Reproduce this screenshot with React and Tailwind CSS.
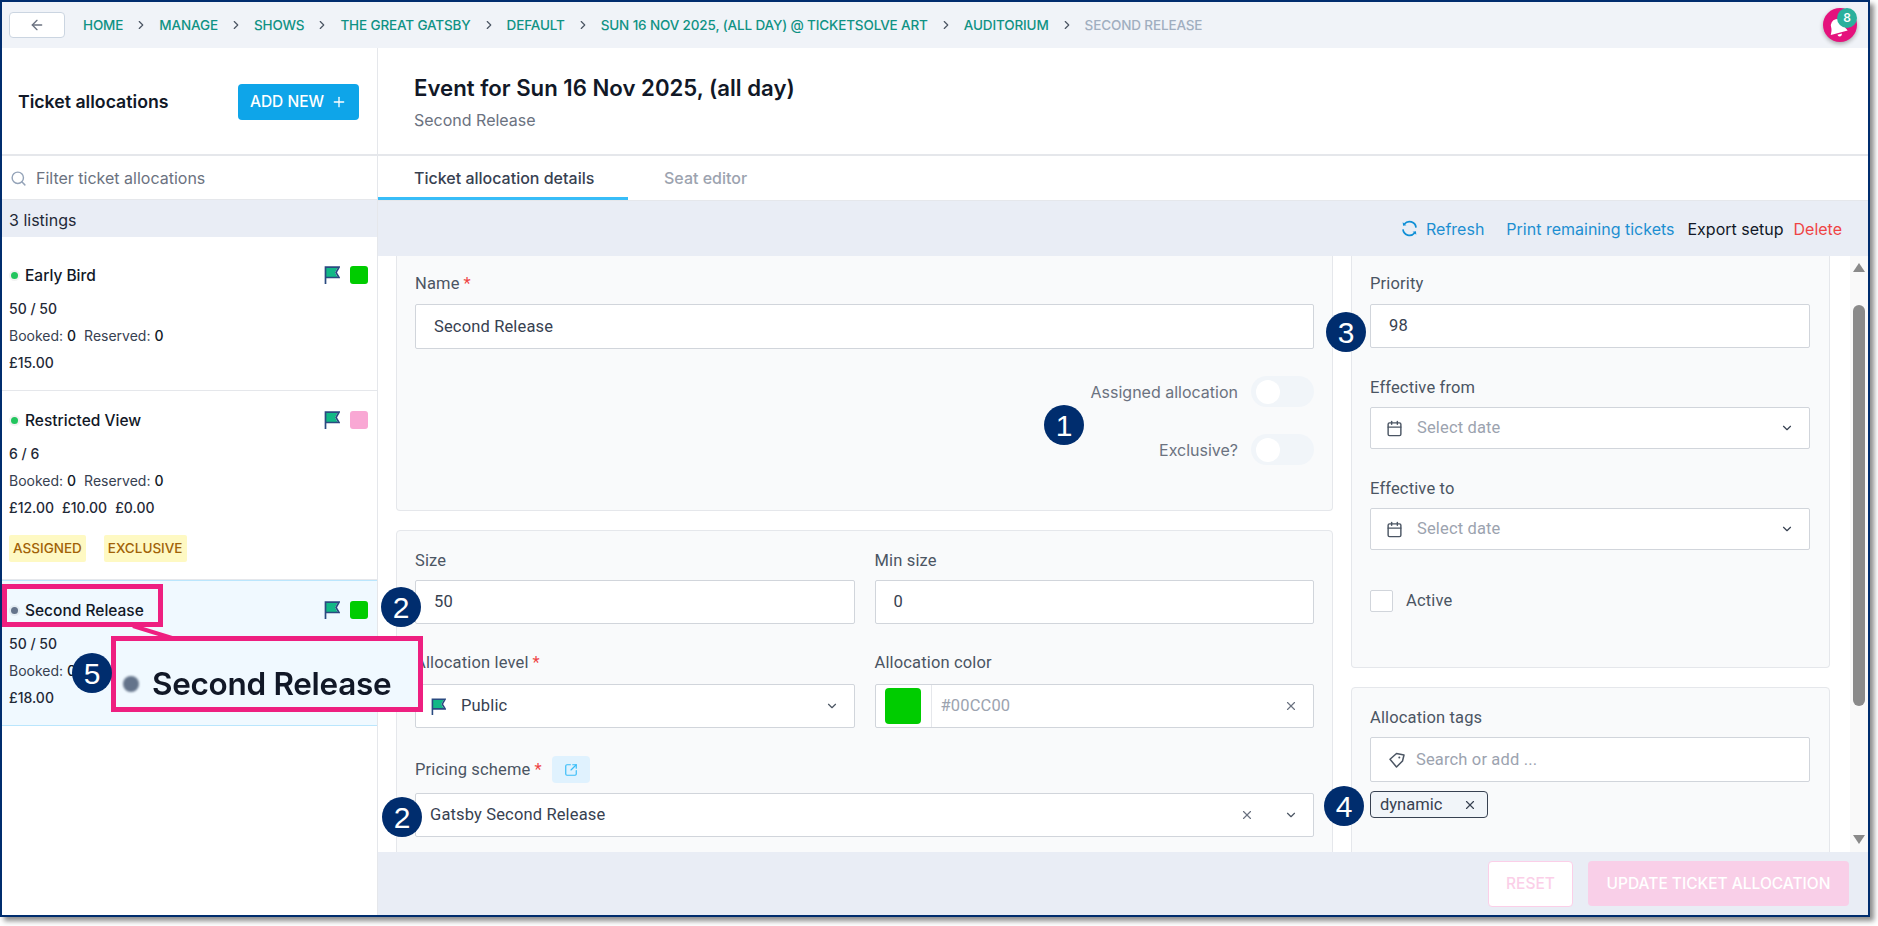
import React from 'react';
import { ArrowLeft, Calendar, ChevronDown, ChevronRight, Plus, Search, SquareArrowOutUpRight, X } from 'lucide-react';

const crumbs = ['HOME', 'MANAGE', 'SHOWS', 'THE GREAT GATSBY', 'DEFAULT', 'SUN 16 NOV 2025, (ALL DAY) @ TICKETSOLVE ART', 'AUDITORIUM'];

function FlagIcon({ className }) {
  return (
    <svg viewBox="0 0 16 18" className={className}>
      <path d="M2 2h11.500L11 6.500l2.500 4.500H2z" fill="#12b886" />
      <path d="M1.500 18V1.200H15L12 6.500l3 5H1.500" fill="none" stroke="#2a4a80" strokeWidth="1.700" />
    </svg>
  );
}

function RefreshIcon({ className }) {
  return (
    <svg viewBox="0 0 18 18" className={className} fill="none" stroke="#0f8fd6" strokeWidth="1.800">
      <path d="M3.600 4.200A7 7 0 0 1 15.900 8" />
      <path d="M14.400 13.800A7 7 0 0 1 2.100 10" />
      <path d="M1.800 2.500l.4 3.600 3.500-.5z" fill="#0f8fd6" stroke="none" />
      <path d="M16.200 15.500l-.4-3.600-3.500.5z" fill="#0f8fd6" stroke="none" />
    </svg>
  );
}

function TagIcon({ className }) {
  return (
    <svg viewBox="0 0 16 16" className={className} fill="none" stroke="#4b5563" strokeWidth="1.500" strokeLinejoin="round">
      <path d="M1 7.200L7.500 1.500 15 3l-1.500 6-6 6z" />
      <circle cx="10.300" cy="5.600" r="1" fill="#4b5563" stroke="none" />
    </svg>
  );
}

function Marker({ n, className }) {
  return (
    <div className={`absolute w-[40px] h-[40px] rounded-full bg-[#002d6e] text-white flex items-center justify-center text-[30px] font-['Liberation_Sans',sans-serif] ${className}`}>
      {n}
    </div>
  );
}

function Listing({ name, dot, swatch, count, prices, badges, className }) {
  return (
    <div className={`px-[7px] border-b ${className}`}>
      <div className="flex items-center h-[20px]">
        <span className={`w-[7px] h-[7px] rounded-full ${dot} ring-2 ring-black/5 ml-[2px]`} />
        <span className="ml-[7px] pt-[1px] text-[15.500px] font-medium text-[#111827]">{name}</span>
        <FlagIcon className="ml-auto w-[16px] h-[18px]" />
        <span className={`ml-[10px] mr-[2px] w-[18px] h-[18px] rounded-[3px] ${swatch}`} />
      </div>
      <p className="mt-[14px] h-[20px] leading-[20px] text-[14px] font-medium text-[#1f2937]">{count}</p>
      <p className="mt-[7px] h-[20px] leading-[20px] text-[14px] text-[#374151]">
        Booked: <span className="font-medium text-[#111827]">0</span>
        <span className="ml-[8px]">Reserved: </span><span className="font-medium text-[#111827]">0</span>
      </p>
      <div className="mt-[7px] h-[20px] leading-[20px] flex gap-[8px] text-[14px] font-medium text-[#1f2937]">
        {prices.map((p) => <span key={p}>{p}</span>)}
      </div>
      {badges && (
        <div className="mt-[17px] flex gap-[18px]">
          {badges.map((b) => (
            <span key={b} className="h-[27px] px-[4px] flex items-center rounded-[2px] bg-[#fef9c3] text-[13.500px] font-medium text-[#a16207]">{b}</span>
          ))}
        </div>
      )}
    </div>
  );
}

function Label({ children, required, className = '' }) {
  return (
    <div className={`h-[20px] leading-[20px] text-[16.500px] tracking-[0.15px] text-[#4b5563] font-['Roboto',sans-serif] ${className}`}>
      {children}
      {required && <span className="ml-[4px] text-[#ef4444]">*</span>}
    </div>
  );
}

function Box({ className = '', children }) {
  return (
    <div className={`flex items-center bg-white border border-[#d1d5db] rounded-[2px] text-[16.500px] tracking-[0.15px] text-[#374151] font-['Roboto',sans-serif] ${className}`}>
      {children}
    </div>
  );
}

function DateField() {
  return (
    <Box className="h-[42px] mt-[9px] pl-[15px] pr-[15px]">
      <Calendar size={17} className="text-[#4b5563]" />
      <span className="ml-[14px] pt-[1px] text-[#9ca3af]">Select date</span>
      <ChevronDown size={14} className="ml-auto text-[#374151]" />
    </Box>
  );
}

function Toggle({ label }) {
  return (
    <div className="flex items-center justify-end h-[31px]">
      <span className="mr-[13px] text-[16px] text-[#6b7280]">{label}</span>
      <span className="w-[63px] h-[31px] rounded-full bg-[#f1f5f9] flex items-center pl-[5px]">
        <span className="w-[24px] h-[24px] rounded-full bg-white" />
      </span>
    </div>
  );
}

export default function App() {
  return (
    <div className="relative w-[1878px] h-[926px] bg-white overflow-hidden font-['Inter',sans-serif]">
      <div className="flex flex-col w-[1870px] h-[917px] border-2 border-[#002d6e] shadow-[4px_4px_5px_rgba(0,0,0,0.45)]">
        {/* top bar */}
        <div className="relative h-[46px] shrink-0 bg-[#f0f3f8] flex items-center pl-[7px]">
          <button className="w-[56px] h-[26px] flex items-center justify-center bg-white border border-[#cbd5e1] rounded-[4px]">
            <ArrowLeft size={16} className="text-[#6b7280]" />
          </button>
          <div className="ml-[18px] flex items-center text-[13.500px] tracking-[-0.14px] font-medium">
            {crumbs.map((c) => (
              <React.Fragment key={c}>
                <span className="text-[#0f9284]">{c}</span>
                <ChevronRight size={14} className="mx-[11px] text-[#4b5563]" />
              </React.Fragment>
            ))}
            <span className="text-[#a0aec0]">SECOND RELEASE</span>
          </div>
          <div className="absolute left-[1821px] top-[6px] w-[34px] h-[34px] rounded-full bg-[#e5127d] shadow-[0_2px_4px_rgba(0,0,0,0.3)]">
            <svg viewBox="0 0 24 24" className="absolute left-[4px] top-[9px] w-[22px] h-[22px] rotate-[-15deg]" fill="#fff">
              <path d="M12 2a7 7 0 0 0-7 7c0 5-2.500 7-2.500 8.500h19C21.500 16 19 14 19 9a7 7 0 0 0-7-7zM9.500 19a2.500 2.500 0 0 0 5 0z" />
            </svg>
            <span className="absolute left-[14px] top-0 w-[20px] h-[20px] rounded-full bg-[#2bb09c] text-white text-[12px] font-semibold flex items-center justify-center">8</span>
          </div>
        </div>

        <div className="flex flex-1 min-h-0">
          {/* sidebar */}
          <div className="w-[376px] shrink-0 border-r border-[#e5e7eb] flex flex-col">
            <div className="h-[108px] shrink-0 border-b-2 border-[#e5e7eb] flex items-center justify-between pl-[16px] pr-[18px] pt-[2px]">
              <h2 className="text-[17.700px] font-semibold text-[#111827]">Ticket allocations</h2>
              <button className="w-[121px] h-[36px] rounded-[4px] bg-[#0ea5e9] text-white text-[15.500px] font-medium flex items-center justify-center gap-[7px]">
                ADD NEW <Plus size={16} />
              </button>
            </div>
            <div className="h-[44px] shrink-0 flex items-center pl-[8px] pt-[1px] border-b border-[#e5e7eb]">
              <Search size={17} className="text-[#94a3b8]" />
              <span className="ml-[9px] text-[16px] text-[#6b7280]">Filter ticket allocations</span>
            </div>
            <div className="h-[37px] shrink-0 bg-[#e9edf5] flex items-center pl-[7px] pt-[2px] text-[16px] text-[#1f2937]">3 listings</div>
            <Listing className="h-[154px] pt-[28px] border-[#e5e7eb]" name="Early Bird" dot="bg-[#22c55e]" swatch="bg-[#00cc00]" count="50 / 50" prices={['£15.00']} />
            <Listing className="h-[189px] pt-[19px] border-[#e5e7eb]" name="Restricted View" dot="bg-[#22c55e]" swatch="bg-[#f9a8d4]" count="6 / 6" prices={['£12.00', '£10.00', '£0.00']} badges={['ASSIGNED', 'EXCLUSIVE']} />
            <Listing className="h-[146px] pt-[19px] border-t bg-[#f0f9ff] border-[#bae6fd]" name="Second Release" dot="bg-[#64748b]" swatch="bg-[#00cc00]" count="50 / 50" prices={['£18.00']} />
          </div>

          {/* content */}
          <div className="flex-1 min-w-0 flex flex-col">
            <div className="h-[108px] shrink-0 border-b-2 border-[#e5e7eb] pl-[36px] pt-[26px]">
              <h1 className="text-[22.200px] leading-[28px] font-semibold text-[#111827]">Event for Sun 16 Nov 2025, (all day)</h1>
              <p className="mt-[8px] text-[16px] leading-[20px] text-[#6b7280]">Second Release</p>
            </div>
            <div className="h-[45px] shrink-0 flex border-b border-[#e5e7eb]">
              <div className="w-[250px] border-b-[3px] border-[#38bdf8] pl-[36px] pt-[10px] text-[16px] font-medium text-[#374151]">Ticket allocation details</div>
              <div className="ml-[36px] pt-[10px] text-[16px] font-medium text-[#9ca3af]">Seat editor</div>
            </div>
            <div className="h-[55px] shrink-0 bg-[#e9edf5] flex items-center justify-end pr-[26px] text-[16px]">
              <RefreshIcon className="w-[17px] h-[17px]" />
              <span className="ml-[8px] text-[#1d8fd1]">Refresh</span>
              <span className="ml-[22px] text-[#1d8fd1]">Print remaining tickets</span>
              <span className="ml-[13px] text-[#111827]">Export setup</span>
              <span className="ml-[10px] text-[#ef4444]">Delete</span>
            </div>

            <div className="flex-1 min-h-0 overflow-hidden flex pl-[18px]">
              <div className="w-[937px] shrink-0">
                <div className="h-[255px] bg-[#f9fafb] border border-t-0 border-[#e5e7eb] rounded-b-[4px] px-[18px] pt-[18px]">
                  <Label required>Name</Label>
                  <Box className="mt-[10px] h-[45px] pl-[18px] pt-[1px]">Second Release</Box>
                  <div className="mt-[27px]"><Toggle label="Assigned allocation" /></div>
                  <div className="mt-[27px]"><Toggle label="Exclusive?" /></div>
                </div>
                <div className="mt-[19px] h-[400px] bg-[#f9fafb] border border-[#e5e7eb] rounded-[4px] px-[18px] pt-[20px]">
                  <div className="grid grid-cols-2 gap-x-[20px]">
                    <div>
                      <Label>Size</Label>
                      <Box className="mt-[9px] h-[44px] pl-[18px]">50</Box>
                    </div>
                    <div>
                      <Label>Min size</Label>
                      <Box className="mt-[9px] h-[44px] pl-[18px]">0</Box>
                    </div>
                    <div className="mt-[29px]">
                      <Label required>Allocation level</Label>
                      <Box className="mt-[11px] h-[44px] pl-[15px] pr-[15px]">
                        <FlagIcon className="w-[15px] h-[17px]" />
                        <span className="ml-[15px] pt-[1px]">Public</span>
                        <ChevronDown size={14} className="ml-auto text-[#4b5563]" />
                      </Box>
                    </div>
                    <div className="mt-[29px]">
                      <Label>Allocation color</Label>
                      <Box className="mt-[11px] h-[44px] pr-[15px]">
                        <span className="h-full w-[56px] shrink-0 border-r border-[#e5e7eb] flex items-center justify-center">
                          <span className="w-[36px] h-[36px] rounded-[4px] bg-[#00cc00]" />
                        </span>
                        <span className="ml-[9px] pt-[1px] text-[#9ca3af]">#00CC00</span>
                        <X size={14} className="ml-auto text-[#6b7280]" />
                      </Box>
                    </div>
                  </div>
                  <div className="mt-[28px] flex items-center h-[27px]">
                    <Label required>Pricing scheme</Label>
                    <span className="ml-[10px] w-[38px] h-[27px] rounded-[4px] bg-[#e0f2fe] flex items-center justify-center">
                      <SquareArrowOutUpRight size={14} className="text-[#38bdf8]" />
                    </span>
                  </div>
                  <Box className="mt-[10px] h-[44px] pl-[14px] pr-[15px]">
                    Gatsby Second Release
                    <X size={14} className="ml-auto text-[#6b7280]" />
                    <ChevronDown size={14} className="ml-[30px] text-[#4b5563]" />
                  </Box>
                </div>
              </div>

              <div className="ml-[18px] w-[479px] shrink-0">
                <div className="h-[412px] bg-[#f9fafb] border border-t-0 border-[#e5e7eb] rounded-b-[4px] pl-[18px] pr-[19px] pt-[18px]">
                  <Label>Priority</Label>
                  <Box className="mt-[10px] h-[44px] pl-[18px] pt-[1px]">98</Box>
                  <Label className="mt-[30px]">Effective from</Label>
                  <DateField />
                  <Label className="mt-[30px]">Effective to</Label>
                  <DateField />
                  <div className="mt-[39px] flex items-center">
                    <span className="w-[23px] h-[22px] bg-white border border-[#d1d5db] rounded-[2px]" />
                    <span className="ml-[13px] text-[16.500px] tracking-[0.15px] text-[#4b5563] font-['Roboto',sans-serif]">Active</span>
                  </div>
                </div>
                <div className="mt-[19px] h-[300px] bg-[#f9fafb] border border-[#e5e7eb] rounded-[4px] pl-[18px] pr-[19px] pt-[20px]">
                  <Label>Allocation tags</Label>
                  <Box className="mt-[9px] h-[45px] pl-[18px]">
                    <TagIcon className="w-[16px] h-[16px]" />
                    <span className="ml-[11px] pt-[1px] text-[#9ca3af]">Search or add ...</span>
                  </Box>
                  <div className="mt-[9px] w-[118px] h-[27px] flex items-center justify-between pl-[9px] pr-[10px] pt-[1px] bg-[#f1f5f9] border border-[#374151] rounded-[4px] text-[16.500px] text-[#374151] font-['Roboto',sans-serif]">
                    dynamic
                    <X size={14} className="text-[#374151]" />
                  </div>
                </div>
              </div>

              {/* scrollbar */}
              <div className="ml-[20px] w-[18px] shrink-0 flex flex-col items-center bg-[#f9f9f9] pt-[7px]">
                <svg viewBox="0 0 12 9" className="w-[12px] h-[9px]" fill="#8a8a8a"><path d="M6 0l6 9H0z" /></svg>
                <div className="mt-[33px] w-[12px] h-[401px] rounded-full bg-[#8a8a8a]" />
                <svg viewBox="0 0 12 9" className="mt-[129px] w-[12px] h-[9px]" fill="#8a8a8a"><path d="M6 9L0 0h12z" /></svg>
              </div>
            </div>

            <div className="h-[63px] shrink-0 bg-[#e9edf5] flex items-center justify-end gap-[15px] pr-[19px]">
              <button className="w-[85px] h-[46px] bg-white border border-[#fbcfe8] rounded-[4px] text-[15.500px] font-medium text-[#fbcfe8]">RESET</button>
              <button className="w-[261px] h-[45px] bg-[#f9cfe8] rounded-[4px] text-[15.500px] font-medium text-white">UPDATE TICKET ALLOCATION</button>
            </div>
          </div>
        </div>
      </div>

      {/* annotations */}
      <div className="absolute left-[2px] top-[584px] w-[161px] h-[43px] border-[5px] border-[#ee1f80]" />
      <svg className="absolute left-[130px] top-[624px] w-[50px] h-[16px]" viewBox="0 0 50 16">
        <path d="M3 2L42 14" stroke="#ee1f80" strokeWidth="4" />
      </svg>
      <div className="absolute left-[111px] top-[636px] w-[312px] h-[76px] border-[5px] border-[#ee1f80] bg-[#f0f9ff] flex items-center pl-[7px] pt-[20px]">
        <span className="w-[16px] h-[16px] rounded-full bg-[#64748b] blur-[1px]" />
        <span className="ml-[13px] text-[31.500px] font-semibold tracking-[-0.3px] text-[#111827] blur-[0.6px]">Second Release</span>
      </div>
      <Marker n={1} className="left-[1044px] top-[405px]" />
      <Marker n={2} className="left-[381px] top-[587px]" />
      <Marker n={2} className="left-[382px] top-[797px]" />
      <Marker n={3} className="left-[1326px] top-[312px]" />
      <Marker n={4} className="left-[1324px] top-[786px]" />
      <Marker n={5} className="left-[72px] top-[653px]" />
    </div>
  );
}
